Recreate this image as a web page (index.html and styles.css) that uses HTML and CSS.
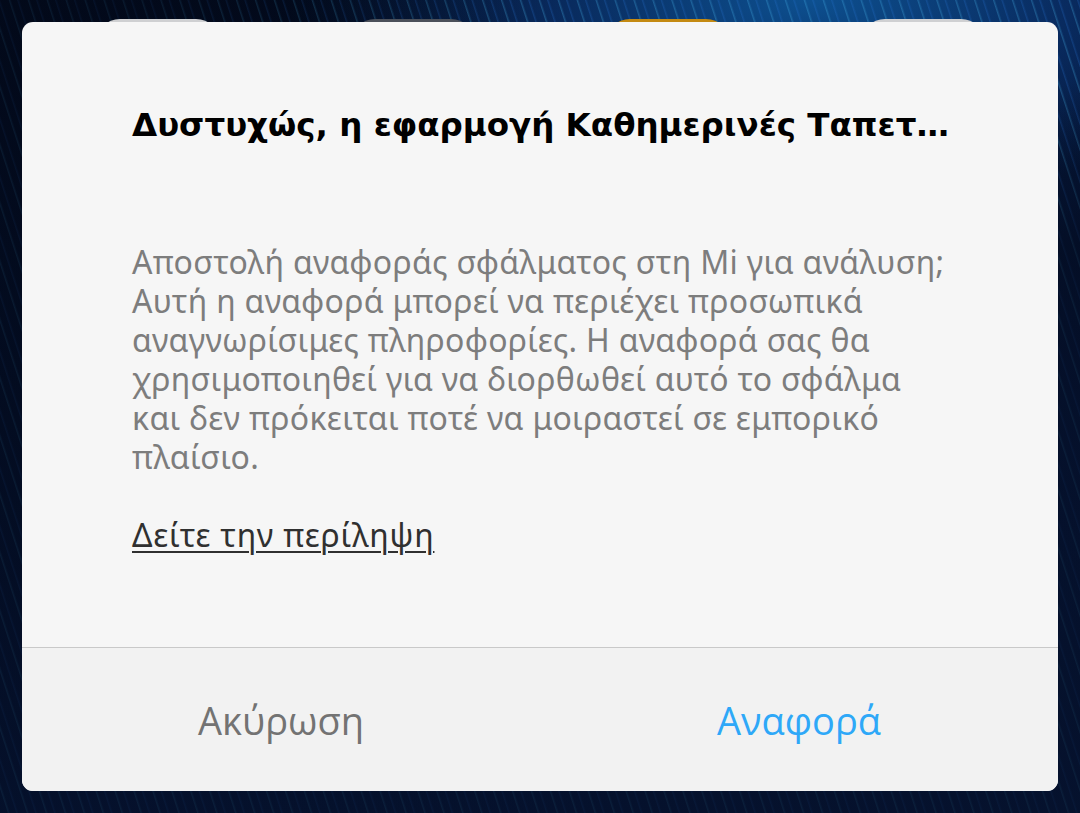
FILE: index.html
```html
<!DOCTYPE html>
<html lang="el">
<head>
<meta charset="utf-8">
<link rel="stylesheet" href="styles.css">
</head>
<body>
<div class="screen">
  <div class="dock">
    <span class="appicon light"></span>
    <span class="appicon dark"></span>
    <span class="appicon gold"></span>
    <span class="appicon light"></span>
  </div>
  <div class="dialog">
    <div class="content">
      <h1 class="title">Δυστυχώς, η εφαρμογή Καθημερινές Ταπετ…</h1>
      <p class="message">Αποστολή αναφοράς σφάλματος στη Mi για ανάλυση;<br>Αυτή η αναφορά μπορεί να περιέχει προσωπικά<br>αναγνωρίσιμες πληροφορίες. Η αναφορά σας θα<br>χρησιμοποιηθεί για να διορθωθεί αυτό το σφάλμα<br>και δεν πρόκειται ποτέ να μοιραστεί σε εμπορικό<br>πλαίσιο.</p>
      <a class="summary">Δείτε την περίληψη</a>
    </div>
    <div class="actions">
      <button class="btn cancel">Ακύρωση</button>
      <button class="btn report">Αναφορά</button>
    </div>
  </div>
</div>
</body>
</html>
```

FILE: styles.css
```css
html, body {
  margin: 0;
  padding: 0;
}
body {
  width: 1080px;
  height: 813px;
  overflow: hidden;
  font-family: "Noto Sans", Roboto, sans-serif;
}
.screen {
  position: relative;
  width: 1080px;
  height: 813px;
  box-sizing: border-box;
  padding: 22px;
  background:
    radial-gradient(ellipse 700px 260px at 78% 0%, rgba(0,0,0,0) 0%, rgba(0,0,0,0) 45%, rgba(3,10,28,0.7) 100%),
    repeating-linear-gradient(72deg, rgba(70,170,230,0) 0px, rgba(70,170,230,0) 7px, rgba(70,180,235,0.3) 8px, rgba(70,170,230,0) 10px, rgba(70,170,230,0) 15px, rgba(40,120,220,0.25) 16px, rgba(70,170,230,0) 18px),
    radial-gradient(ellipse 520px 200px at 75% 0%, #0d5090 0%, rgba(13,60,130,0.6) 50%, rgba(10,40,100,0) 100%),
    linear-gradient(160deg, #010714 0%, #03112c 35%, #092050 70%, #0b2456 100%);
}
.dock {
  position: absolute;
  top: 19px;
  left: 0;
  width: 1080px;
  display: flex;
  gap: 131px;
  padding-left: 96px;
  box-sizing: border-box;
}
.appicon {
  width: 124px;
  height: 24px;
  border-radius: 24px 24px 0 0;
}
.appicon.light { background: #cfd0d2; }
.appicon.dark { background: #4b505a; }
.appicon.gold { background: #c48a12; }
.dialog {
  position: relative;
  height: 769px;
  border-radius: 11px;
  overflow: hidden;
  background: #f6f6f6;
  display: flex;
  flex-direction: column;
}
.content {
  flex: 1;
  padding: 81px 110px 0 110px;
  box-sizing: border-box;
  border-bottom: 1px solid #c9c9c9;
}
.title {
  margin: 0;
  font-family: "DejaVu Sans", "Noto Sans", sans-serif;
  font-size: 32.5px;
  font-weight: 700;
  line-height: 44px;
  color: #000;
  white-space: nowrap;
}
.message {
  margin: 95px 0 0 0;
  font-size: 32px;
  line-height: 39px;
  letter-spacing: 0.3px;
  color: #7d7d7d;
  white-space: nowrap;
}
.summary {
  display: inline-block;
  margin-top: 39px;
  font-size: 32px;
  line-height: 39px;
  letter-spacing: 0.75px;
  color: #303030;
  text-decoration: underline;
  text-underline-offset: 4px;
  text-decoration-thickness: 2px;
}
.actions {
  height: 143px;
  flex: none;
  display: grid;
  grid-template-columns: 1fr 1fr;
  background: #f2f2f2;
}
.btn {
  border: 0;
  background: transparent;
  font-family: "Open Sans", "Noto Sans", sans-serif;
  font-size: 38px;
  padding: 0;
  margin: 0;
}
.cancel { color: #737373; }
.report { color: #2ea8f8; }
```
